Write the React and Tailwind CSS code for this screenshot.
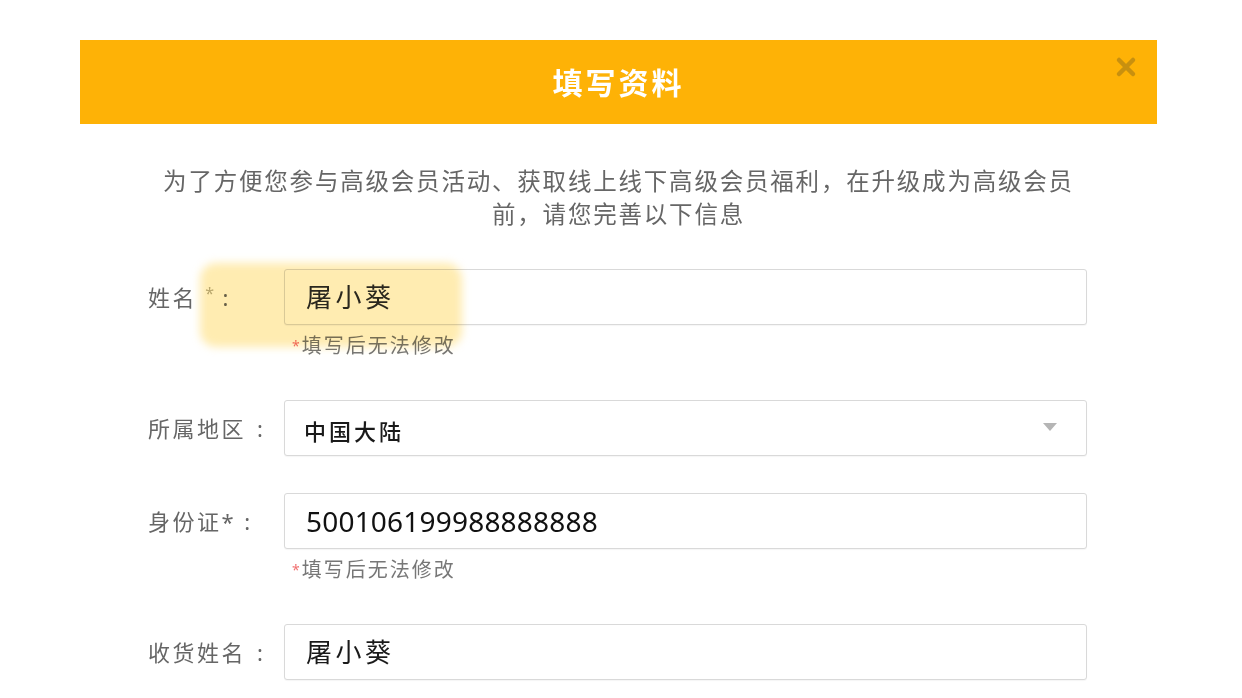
import React from "react";

const font = "font-['Noto_Sans','Noto_Sans_CJK_SC',sans-serif]";

function Field({ label, children, hint, select }) {
  return (
    <div className="flex">
      <div className="w-[136px] h-[56px] flex items-center text-[22px] tracking-[2.5px] text-[#666]">
        {label}
      </div>
      <div className="flex flex-col">
        <div className="relative w-[803px] h-[56px] flex items-center pl-[21px] border border-[#d9d9d9] rounded-[3px] bg-white shadow-[0_1px_1px_rgba(0,0,0,0.04)]">
          {children}
          {select && (
            <svg
              className="absolute right-[28px] top-[21px]"
              width="16"
              height="10"
              viewBox="0 0 16 10"
            >
              <path d="M1 1 L15 1 L8 9 Z" fill="#b5b5b5" />
            </svg>
          )}
        </div>
        {hint && (
          <div className="mt-[9px] mb-[5px] pl-[8px] h-[24px] leading-[24px] text-[20px] tracking-[2px] text-[#777]">
            <span className="text-[#f07070] text-[14px] align-top">*</span>
            填写后无法修改
          </div>
        )}
      </div>
    </div>
  );
}

const Colon = () => <span className="ml-[11px]">:</span>;

export default function App() {
  return (
    <div className={`relative w-[1242px] h-[698px] bg-white overflow-hidden ${font}`}>
      <div className="ml-[80px] mt-[40px] w-[1077px]">
        <div className="relative h-[84px] bg-[#feb206] flex items-center justify-center">
          <span className="text-white text-[30px] font-bold tracking-[3px]">填写资料</span>
          <svg
            className="absolute right-[20px] top-[16px]"
            width="22"
            height="22"
            viewBox="0 0 22 22"
          >
            <path
              d="M4 4 L18 18 M18 4 L4 18"
              stroke="#c8900f"
              strokeWidth="4.5"
              strokeLinecap="round"
            />
          </svg>
        </div>

        <p className="mx-auto mt-[41px] w-[930px] text-center text-[23.5px] leading-[33px] tracking-[1.8px] text-[#666]">
          为了方便您参与高级会员活动、获取线上线下高级会员福利，在升级成为高级会员前，请您完善以下信息
        </p>

        <div className="mt-[38px] ml-[68px] flex flex-col gap-[37px]">
          <Field
            label={
              <span>
                姓名 <span className="text-[#b8b39a] text-[16px] align-top">*</span>
                <span className="ml-[6px]">:</span>
              </span>
            }
            hint
          >
            <span className="text-[26px] tracking-[3.5px] text-[#2a2a2a]">屠小葵</span>
          </Field>
          <Field
            label={
              <span>
                所属地区
                <Colon />
              </span>
            }
            select
          >
            <span className="-ml-[2px] mt-[7px] text-[22px] font-medium tracking-[3px] text-[#1a1a1a]">中国大陆</span>
          </Field>
          <Field
            label={
              <span>
                身份证*
                <span className="ml-[8px]">:</span>
              </span>
            }
            hint
          >
            <span className="text-[28px] tracking-[0.2px] text-[#111]">500106199988888888</span>
          </Field>
          <Field
            label={
              <span>
                收货姓名
                <Colon />
              </span>
            }
          >
            <span className="text-[26px] tracking-[3.5px] text-[#1a1a1a]">屠小葵</span>
          </Field>
        </div>
      </div>

      <div className="absolute left-[200px] top-[263px] w-[262px] h-[84px] rounded-[16px] bg-[#ffd964]/50 blur-[4px] mix-blend-multiply pointer-events-none" />
    </div>
  );
}
